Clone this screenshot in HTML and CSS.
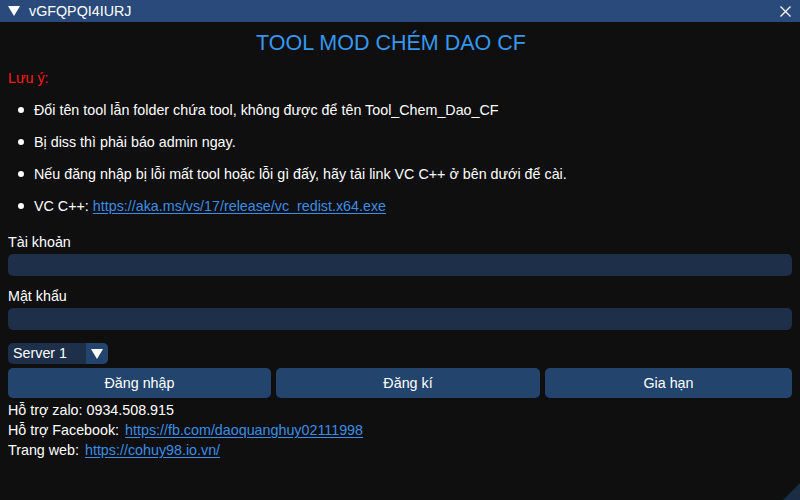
FILE: index.html
```html
<!DOCTYPE html>
<html lang="vi">
<head>
<meta charset="utf-8">
<title>vGFQPQI4IURJ</title>
<link rel="stylesheet" href="styles.css">
</head>
<body>
<div class="window">
  <div class="titlebar">
    <svg class="collapse" width="12" height="10" viewBox="0 0 12 10"><polygon points="0,0 12,0 6,10" fill="#fff"/></svg>
    <span class="wtitle">vGFQPQI4IURJ</span>
    <svg class="close" width="11" height="11" viewBox="0 0 11 11"><path d="M0.5 0.5 L10.5 10.5 M10.5 0.5 L0.5 10.5" stroke="#fff" stroke-width="1.3"/></svg>
  </div>
  <div class="content">
    <div class="heading">TOOL MOD CHÉM DAO CF</div>
    <div class="note">Lưu ý:</div>
    <ul class="bullets">
      <li>Đổi tên tool lẫn folder chứa tool, không được để tên Tool_Chem_Dao_CF</li>
      <li>Bị diss thì phải báo admin ngay.</li>
      <li>Nếu đăng nhập bị lỗi mất tool hoặc lỗi gì đấy, hãy tải link VC C++ ở bên dưới để cài.</li>
      <li>VC C++: <a class="link" href="#">https://aka.ms/vs/17/release/vc_redist.x64.exe</a></li>
    </ul>
    <div class="label first">Tài khoản</div>
    <div class="input"></div>
    <div class="label">Mật khẩu</div>
    <div class="input"></div>
    <div class="combo">
      <span class="combo-text">Server 1</span>
      <span class="combo-arrow"><svg width="12" height="10" viewBox="0 0 12 10"><polygon points="0,0 12,0 6,10" fill="#fff"/></svg></span>
    </div>
    <div class="buttons">
      <div class="btn">Đăng nhập</div>
      <div class="btn">Đăng kí</div>
      <div class="btn">Gia hạn</div>
    </div>
    <div class="info">
      <div class="line">Hỗ trợ zalo: 0934.508.915</div>
      <div class="line">Hỗ trợ Facebook: <a class="link gap" href="#">https://fb.com/daoquanghuy02111998</a></div>
      <div class="line">Trang web: <a class="link gap" href="#">https://cohuy98.io.vn/</a></div>
    </div>
  </div>
  <div class="grip"></div>
</div>
</body>
</html>
```
FILE: styles.css
```css
html, body {
  margin: 0;
  padding: 0;
  background: #0f0f0f;
}
body {
  font-family: "Liberation Sans", Arial, sans-serif;
  font-size: 14.3px;
  color: #ffffff;
}
.window {
  position: relative;
  width: 800px;
  height: 500px;
  background: #0f0f0f;
  overflow: hidden;
}
.titlebar {
  height: 22px;
  background: #294a7a;
  display: flex;
  align-items: center;
  padding: 0 9px 0 8px;
}
.collapse { flex: none; }
.wtitle {
  margin-left: 9px;
  flex: 1;
  line-height: 22px;
}
.close { flex: none; }
.content {
  padding: 0 8px;
}
.heading {
  margin-top: 11px;
  padding-right: 18px;
  text-align: center;
  font-size: 21.5px;
  line-height: 20px;
  color: #3597ee;
}
.note {
  margin-top: 15px;
  line-height: 20px;
  color: #ff1a1a;
}
.bullets {
  list-style: none;
  margin: 0;
  padding: 0;
}
.bullets li {
  position: relative;
  margin-top: 12px;
  line-height: 20px;
  padding-left: 26px;
}
.bullets li::before {
  content: "";
  position: absolute;
  left: 10px;
  top: 7px;
  width: 6px;
  height: 6px;
  border-radius: 50%;
  background: #fff;
}
.link {
  color: #3b8ee6;
  text-decoration: underline;
  text-underline-offset: 2px;
}
.link.gap { margin-left: 2px; }
.label {
  margin-top: 10px;
  line-height: 20px;
}
.label.first { margin-top: 16px; }
.input {
  margin-top: 2px;
  height: 22px;
  border-radius: 5px;
  background: #1d2f49;
}
.combo {
  margin-top: 13px;
  width: 100px;
  height: 21px;
  border-radius: 5px;
  background: #1d2f49;
  display: flex;
  overflow: hidden;
}
.combo-text {
  flex: 1;
  padding-left: 5px;
  line-height: 21px;
}
.combo-arrow {
  width: 22px;
  background: #23456d;
  display: flex;
  align-items: center;
  justify-content: center;
}
.buttons {
  margin-top: 4px;
  display: grid;
  grid-template-columns: 263px 264px 1fr;
  gap: 5px;
}
.btn {
  height: 30px;
  line-height: 30px;
  text-align: center;
  background: #23456d;
  border-radius: 5px;
}
.info { margin-top: 2px; }
.line { line-height: 20px; }
.grip {
  position: absolute;
  right: 0;
  bottom: 0;
  width: 0;
  height: 0;
  border-style: solid;
  border-width: 0 0 17px 17px;
  border-color: transparent transparent #1b2d45 transparent;
}
```
